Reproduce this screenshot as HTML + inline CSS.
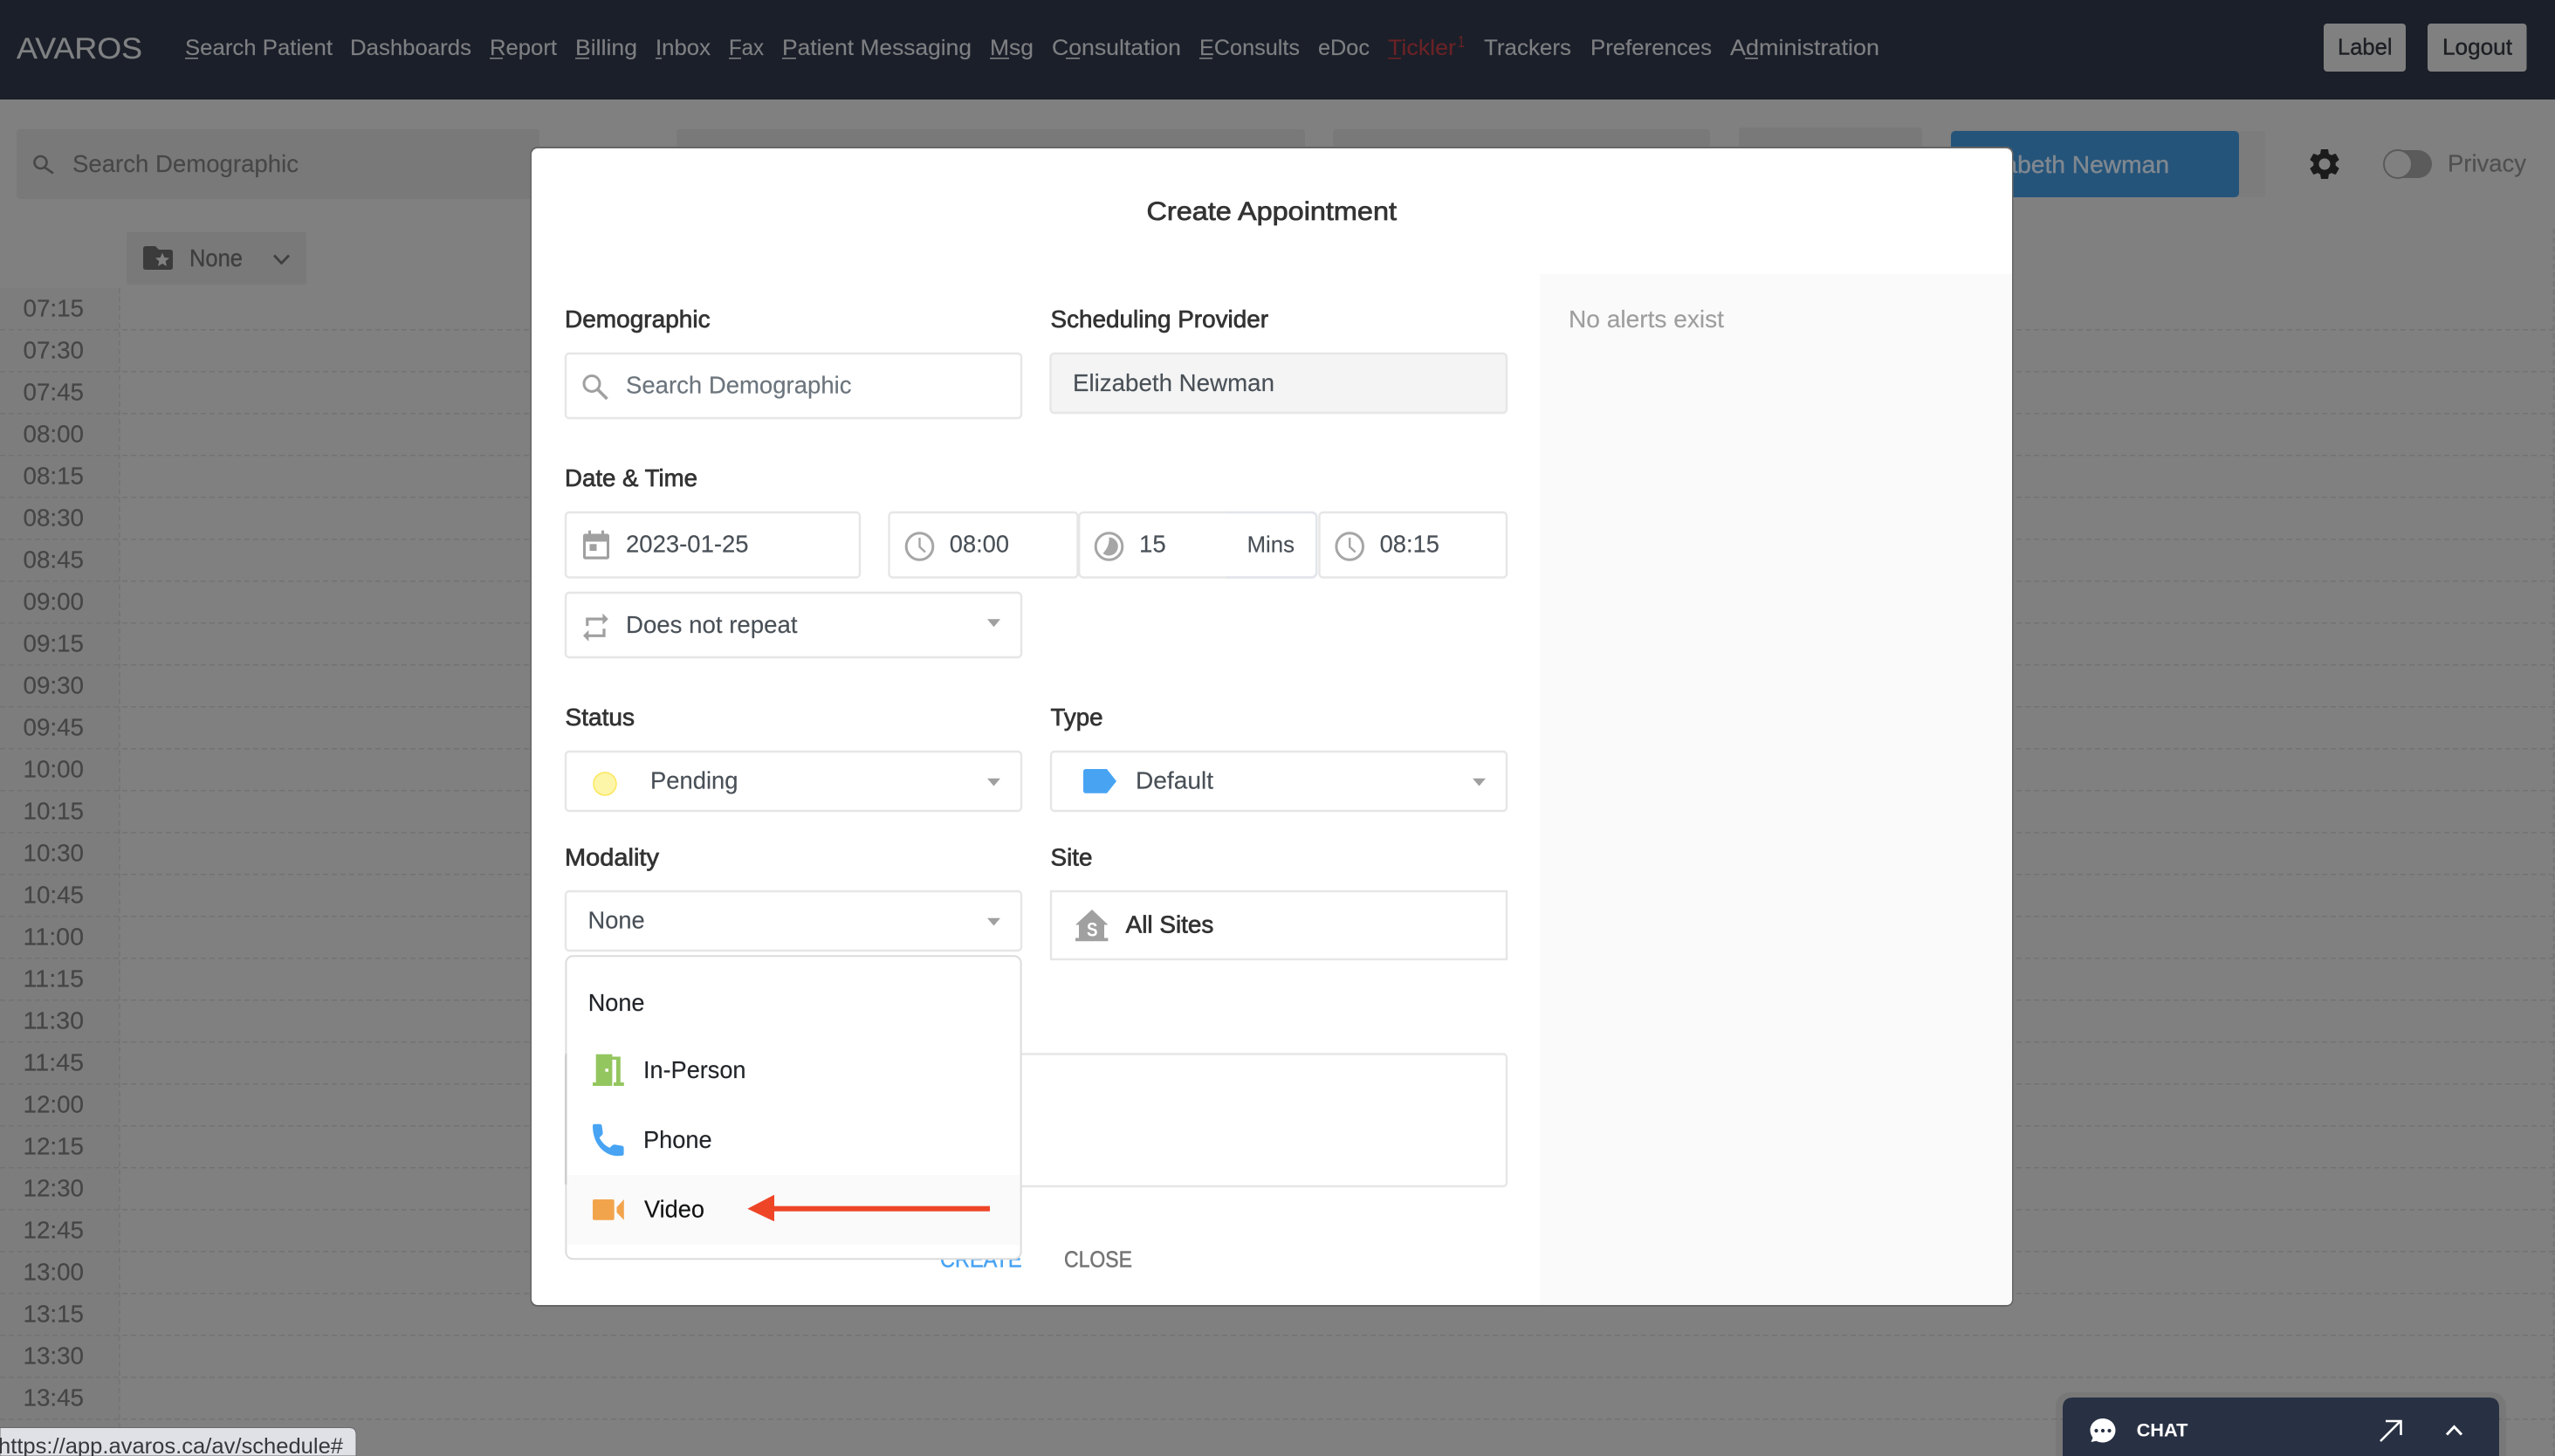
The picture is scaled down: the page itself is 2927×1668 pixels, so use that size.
<!DOCTYPE html>
<html lang="en">
<head>
<meta charset="utf-8">
<title>Create Appointment</title>
<style>
html,body{margin:0;padding:0;background:#808080;width:2927px;height:1668px;overflow:hidden}
svg{display:block;font-family:"Liberation Sans",Arial,sans-serif}
.nav{font-size:25px;fill:#7e7f82;stroke:#7e7f82;stroke-width:.15}
.time{font-size:27.5px;fill:#454545;stroke:#454545;stroke-width:.15}
.lab{font-size:27.5px;fill:#333;stroke:#333;stroke-width:.7}
.val{font-size:27.5px;fill:#495057;stroke:#495057;stroke-width:.15}
.itm{font-size:27.5px;fill:#212529;stroke:#212529;stroke-width:.15}
.box{fill:#fff;stroke:#e6e6e6;stroke-width:2.4}
.ic{fill:#a0a0a0}
.clk{fill:none;stroke:#a6a6a6;stroke-width:3}
.hand{fill:none;stroke:#a6a6a6;stroke-width:2.4}
</style>
</head>
<body>
<svg xmlns="http://www.w3.org/2000/svg" width="2927" height="1668" viewBox="0 0 2927 1668">
<!-- page background -->
<rect width="2927" height="1668" fill="#808080"/>
<rect x="0" y="330" width="137" height="1338" fill="#7d7d7d"/>

<!-- nav -->
<rect width="2927" height="114" fill="#1b1f29"/>
<text x="19" y="67" font-size="34" fill="#808183" stroke="#808183" stroke-width=".2" textLength="144" lengthAdjust="spacingAndGlyphs">AVAROS</text>
<text class="nav" x="212" y="63" textLength="169" lengthAdjust="spacingAndGlyphs">Search Patient</text>
<text class="nav" x="401" y="63" textLength="139" lengthAdjust="spacingAndGlyphs">Dashboards</text>
<text class="nav" x="561" y="63" textLength="77" lengthAdjust="spacingAndGlyphs">Report</text>
<text class="nav" x="659" y="63" textLength="71" lengthAdjust="spacingAndGlyphs">Billing</text>
<text class="nav" x="751" y="63" textLength="63" lengthAdjust="spacingAndGlyphs">Inbox</text>
<text class="nav" x="835" y="63" textLength="40" lengthAdjust="spacingAndGlyphs">Fax</text>
<text class="nav" x="896" y="63" textLength="217" lengthAdjust="spacingAndGlyphs">Patient Messaging</text>
<text class="nav" x="1134" y="63" textLength="50" lengthAdjust="spacingAndGlyphs">Msg</text>
<text class="nav" x="1205" y="63" textLength="148" lengthAdjust="spacingAndGlyphs">Consultation</text>
<text class="nav" x="1374" y="63" textLength="115" lengthAdjust="spacingAndGlyphs">EConsults</text>
<text class="nav" x="1510" y="63" textLength="59" lengthAdjust="spacingAndGlyphs">eDoc</text>
<text class="nav" x="1590" y="63" textLength="78" lengthAdjust="spacingAndGlyphs" style="fill:#6a2226;stroke:#6a2226">Tickler</text>
<text x="1670" y="54" font-size="18" fill="#6a2226" textLength="8" lengthAdjust="spacingAndGlyphs">1</text>
<text class="nav" x="1700" y="63" textLength="100" lengthAdjust="spacingAndGlyphs">Trackers</text>
<text class="nav" x="1822" y="63" textLength="139" lengthAdjust="spacingAndGlyphs">Preferences</text>
<text class="nav" x="1982" y="63" textLength="171" lengthAdjust="spacingAndGlyphs">Administration</text>
<!-- nav underlines -->
<g fill="#7e7f82">
<rect x="212" y="66" width="15" height="1.6"/>
<rect x="561" y="66" width="15" height="1.6"/>
<rect x="659" y="66" width="16" height="1.6"/>
<rect x="751" y="66" width="7" height="1.6"/>
<rect x="835" y="66" width="14" height="1.6"/>
<rect x="896" y="66" width="16" height="1.6"/>
<rect x="1134" y="66" width="22" height="1.6"/>
<rect x="1221" y="66" width="16" height="1.6"/>
<rect x="1374" y="66" width="15" height="1.6"/>
<rect x="1999" y="66" width="15" height="1.6"/>
</g>
<rect x="1590" y="66" width="15" height="1.6" fill="#6a2226"/>
<!-- nav buttons -->
<rect x="2662" y="27" width="94" height="55" rx="4" fill="#808080"/>
<rect x="2781" y="27" width="113.5" height="55" rx="4" fill="#808080"/>
<text x="2678" y="62.5" font-size="26" fill="#1d1f24" textLength="62.5" lengthAdjust="spacingAndGlyphs" stroke="#1d1f24" stroke-width=".4">Label</text>
<text x="2798" y="62.5" font-size="26" fill="#1d1f24" textLength="80" lengthAdjust="spacingAndGlyphs" stroke="#1d1f24" stroke-width=".4">Logout</text>

<!-- top bar behind overlay -->
<rect x="19" y="148" width="599" height="80" rx="4" fill="#797979"/>
<path d="M46.500 186m-7 0a7 7 0 1 0 14 0a7 7 0 1 0-14 0M51.500 192L61 198.500" fill="none" stroke="#474747" stroke-width="2.600"/>
<text x="83" y="197" font-size="28" fill="#474747" stroke="#474747" stroke-width=".15" textLength="259" lengthAdjust="spacingAndGlyphs">Search Demographic</text>
<rect x="775" y="148" width="720" height="80" rx="4" fill="#797979"/>
<rect x="1527" y="148" width="432" height="80" rx="4" fill="#797979"/>
<rect x="1992" y="146" width="210" height="82" rx="4" fill="#797979"/>
<rect x="2235" y="150" width="360" height="76" rx="4" fill="#7c7c7c"/>
<rect x="2235" y="150" width="330" height="76" rx="5" fill="#25547a"/>
<text x="2250" y="198" font-size="28" fill="#808890" stroke="#808890" stroke-width=".4" textLength="235" lengthAdjust="spacingAndGlyphs">Elizabeth Newman</text>
<!-- gear -->
<path transform="translate(2642.600 167.600) scale(1.7)" fill="#1b1b1b" d="M19.43 12.98c.04-.32.07-.64.07-.98s-.03-.66-.07-.98l2.11-1.65c.19-.15.24-.42.12-.64l-2-3.46c-.12-.22-.39-.3-.61-.22l-2.49 1c-.52-.4-1.08-.73-1.69-.98l-.38-2.65C14.46 2.18 14.25 2 14 2h-4c-.25 0-.46.18-.49.42l-.38 2.65c-.61.25-1.17.59-1.69.98l-2.49-1c-.23-.09-.49 0-.61.22l-2 3.46c-.13.22-.07.49.12.64l2.11 1.65c-.04.32-.07.65-.07.98s.03.66.07.98l-2.11 1.65c-.19.15-.24.42-.12.64l2 3.46c.12.22.39.3.61.22l2.49-1c.52.4 1.08.73 1.69.98l.38 2.65c.03.24.24.42.49.42h4c.25 0 .46-.18.49-.42l.38-2.65c.61-.25 1.17-.59 1.69-.98l2.49 1c.23.09.49 0 .61-.22l2-3.46c.12-.22.07-.49-.12-.64l-2.11-1.65z"/>
<circle cx="2663" cy="188" r="6.500" fill="#808080"/>
<!-- toggle -->
<rect x="2731" y="172" width="55" height="32" rx="16" fill="#5b5b5b"/>
<circle cx="2747" cy="188" r="16" fill="#808080" stroke="#5a5a5a" stroke-width="2"/>
<text x="2804" y="196.700" font-size="28" fill="#505050" stroke="#505050" stroke-width=".2" textLength="90" lengthAdjust="spacingAndGlyphs">Privacy</text>

<!-- none dropdown -->
<rect x="145" y="266" width="206" height="60" rx="2" fill="#797979"/>
<path d="M167 282h11l4 4h13q3 0 3 3v17q0 3-3 3H167q-3 0-3-3V285q0-3 3-3z" fill="#3b3b3b"/>
<polygon points="186,289.500 188.300,295 194,295.500 189.700,299.200 191,305 186,302 181,305 182.300,299.200 178,295.500 183.700,295" fill="#808080"/>
<text x="217" y="305" font-size="27.500" fill="#3f3f3f" stroke="#3f3f3f" stroke-width=".4" textLength="61" lengthAdjust="spacingAndGlyphs">None</text>
<path d="M314 292.500L322.500 301.500L331 292.500" fill="none" stroke="#3f3f3f" stroke-width="2.800"/>

<!-- schedule grid -->
<path d="M0 377.700H2927M0 425.700H2927M0 473.700H2927M0 521.700H2927M0 569.700H2927M0 617.700H2927M0 665.700H2927M0 713.700H2927M0 761.700H2927M0 809.700H2927M0 857.700H2927M0 905.700H2927M0 953.700H2927M0 1001.700H2927M0 1049.700H2927M0 1097.700H2927M0 1145.700H2927M0 1193.700H2927M0 1241.700H2927M0 1289.700H2927M0 1337.700H2927M0 1385.700H2927M0 1433.700H2927M0 1481.700H2927M0 1529.700H2927M0 1577.700H2927M0 1625.700H2927" fill="none" stroke="#727272" stroke-width="1.500" stroke-dasharray="6 4"/>
<path d="M137 330V1668M2925.500 262V1668" fill="none" stroke="#727272" stroke-width="1.500" stroke-dasharray="6 4"/>
<g class="time">
<text x="26.500" y="362.400" textLength="69.500" lengthAdjust="spacingAndGlyphs">07:15</text>
<text x="26.500" y="410.400" textLength="69.500" lengthAdjust="spacingAndGlyphs">07:30</text>
<text x="26.500" y="458.400" textLength="69.500" lengthAdjust="spacingAndGlyphs">07:45</text>
<text x="26.500" y="506.400" textLength="69.500" lengthAdjust="spacingAndGlyphs">08:00</text>
<text x="26.500" y="554.400" textLength="69.500" lengthAdjust="spacingAndGlyphs">08:15</text>
<text x="26.500" y="602.400" textLength="69.500" lengthAdjust="spacingAndGlyphs">08:30</text>
<text x="26.500" y="650.400" textLength="69.500" lengthAdjust="spacingAndGlyphs">08:45</text>
<text x="26.500" y="698.400" textLength="69.500" lengthAdjust="spacingAndGlyphs">09:00</text>
<text x="26.500" y="746.400" textLength="69.500" lengthAdjust="spacingAndGlyphs">09:15</text>
<text x="26.500" y="794.400" textLength="69.500" lengthAdjust="spacingAndGlyphs">09:30</text>
<text x="26.500" y="842.400" textLength="69.500" lengthAdjust="spacingAndGlyphs">09:45</text>
<text x="26.500" y="890.400" textLength="69.500" lengthAdjust="spacingAndGlyphs">10:00</text>
<text x="26.500" y="938.400" textLength="69.500" lengthAdjust="spacingAndGlyphs">10:15</text>
<text x="26.500" y="986.400" textLength="69.500" lengthAdjust="spacingAndGlyphs">10:30</text>
<text x="26.500" y="1034.400" textLength="69.500" lengthAdjust="spacingAndGlyphs">10:45</text>
<text x="26.500" y="1082.400" textLength="69.500" lengthAdjust="spacingAndGlyphs">11:00</text>
<text x="26.500" y="1130.400" textLength="69.500" lengthAdjust="spacingAndGlyphs">11:15</text>
<text x="26.500" y="1178.400" textLength="69.500" lengthAdjust="spacingAndGlyphs">11:30</text>
<text x="26.500" y="1226.400" textLength="69.500" lengthAdjust="spacingAndGlyphs">11:45</text>
<text x="26.500" y="1274.400" textLength="69.500" lengthAdjust="spacingAndGlyphs">12:00</text>
<text x="26.500" y="1322.400" textLength="69.500" lengthAdjust="spacingAndGlyphs">12:15</text>
<text x="26.500" y="1370.400" textLength="69.500" lengthAdjust="spacingAndGlyphs">12:30</text>
<text x="26.500" y="1418.400" textLength="69.500" lengthAdjust="spacingAndGlyphs">12:45</text>
<text x="26.500" y="1466.400" textLength="69.500" lengthAdjust="spacingAndGlyphs">13:00</text>
<text x="26.500" y="1514.400" textLength="69.500" lengthAdjust="spacingAndGlyphs">13:15</text>
<text x="26.500" y="1562.400" textLength="69.500" lengthAdjust="spacingAndGlyphs">13:30</text>
<text x="26.500" y="1610.400" textLength="69.500" lengthAdjust="spacingAndGlyphs">13:45</text>
</g>

<!-- status bar -->
<path d="M0 1635.500H400q8 0 8 8V1668H0z" fill="#e0e1e6" stroke="#6a6a6a" stroke-width="1"/>
<text x="-2" y="1665" font-size="25" fill="#37383c" textLength="395" lengthAdjust="spacingAndGlyphs">https://app.avaros.ca/av/schedule#</text>

<!-- chat -->
<rect x="2355" y="1595" width="516" height="90" rx="16" fill="#000" opacity=".06"/>
<path d="M2363 1668V1613q0-12 12-12H2851q12 0 12 12V1668z" fill="#283043"/>
<path d="M2409 1625c8 0 14.500 6 14.500 13.500s-6.500 14-14.500 14c-3 0-5.500-.6-7.500-1.800l-6 1.300 2-5c-1.800-2.500-3-5.400-3-8.500 0-7.500 6.500-13.500 14.500-13.500z" fill="#fff"/>
<circle cx="2401.500" cy="1639" r="2.100" fill="#283043"/>
<circle cx="2409" cy="1639" r="2.100" fill="#283043"/>
<circle cx="2416.500" cy="1639" r="2.100" fill="#283043"/>
<text x="2447.600" y="1645.700" font-size="21.500" font-weight="bold" fill="#fff" textLength="58.800" lengthAdjust="spacingAndGlyphs">CHAT</text>
<path d="M2727 1651L2750 1628M2733 1628H2750.500V1644" fill="none" stroke="#fff" stroke-width="2.600"/>
<path d="M2803 1643.500L2811.500 1634.500L2820 1643.500" fill="none" stroke="#fff" stroke-width="3"/>

<!-- modal -->
<rect x="607.500" y="168" width="1699" height="1329" rx="8" fill="#666"/>
<rect x="609" y="170" width="1696" height="1325" rx="7" fill="#fff"/>
<path d="M1764 314H2305V1488q0 7-7 7H1764z" fill="#fafafa"/>
<text x="1313.500" y="252" font-size="30" fill="#333" stroke="#333" stroke-width=".75" textLength="286.500" lengthAdjust="spacingAndGlyphs">Create Appointment</text>
<text x="1797" y="375" font-size="27.500" fill="#9e9e9e" stroke="#9e9e9e" stroke-width=".15" textLength="178" lengthAdjust="spacingAndGlyphs">No alerts exist</text>

<!-- labels -->
<text class="lab" x="647" y="375" textLength="166.600" lengthAdjust="spacingAndGlyphs">Demographic</text>
<text class="lab" x="1203.500" y="375" textLength="249.500" lengthAdjust="spacingAndGlyphs">Scheduling Provider</text>
<text class="lab" x="647" y="557" textLength="152" lengthAdjust="spacingAndGlyphs">Date &amp; Time</text>
<text class="lab" x="647.500" y="831" textLength="79.500" lengthAdjust="spacingAndGlyphs">Status</text>
<text class="lab" x="1203.500" y="831" textLength="60" lengthAdjust="spacingAndGlyphs">Type</text>
<text class="lab" x="647" y="991.700" textLength="108" lengthAdjust="spacingAndGlyphs">Modality</text>
<text class="lab" x="1203.500" y="991.700" textLength="48" lengthAdjust="spacingAndGlyphs">Site</text>

<!-- demographic -->
<rect class="box" x="648" y="405" width="522" height="74" rx="4"/>
<circle cx="678" cy="439.500" r="9" fill="none" stroke="#a0a0a0" stroke-width="3"/>
<path d="M684.500 446L695.500 457" stroke="#a0a0a0" stroke-width="3.600" fill="none"/>
<text x="717" y="450.700" font-size="27.500" fill="#6c757d" stroke="#6c757d" stroke-width=".15" textLength="258.500" lengthAdjust="spacingAndGlyphs">Search Demographic</text>

<!-- provider -->
<rect x="1203.500" y="405" width="522.500" height="68" rx="4" fill="#f4f4f4" stroke="#e6e6e6" stroke-width="2.400"/>
<text class="val" x="1229" y="448" textLength="231" lengthAdjust="spacingAndGlyphs">Elizabeth Newman</text>

<!-- date & time -->
<rect class="box" x="648" y="587" width="337" height="74.500" rx="4"/>
<rect x="674" y="607.700" width="3" height="6" fill="#a0a0a0"/>
<rect x="689" y="607.700" width="3" height="6" fill="#a0a0a0"/>
<rect x="668" y="611.500" width="30" height="29.200" rx="2.500" fill="#a0a0a0"/>
<rect x="671" y="620.500" width="24" height="17" fill="#fff"/>
<rect x="675.500" y="623.300" width="8" height="7.700" fill="#a0a0a0"/>
<text class="val" x="717" y="632.700" textLength="140.600" lengthAdjust="spacingAndGlyphs">2023-01-25</text>

<rect class="box" x="1018.500" y="587" width="216" height="74.500" rx="4"/>
<circle class="clk" cx="1053.500" cy="626" r="15.300"/>
<path class="hand" d="M1053.500 616V626.500L1060 632.500"/>
<text class="val" x="1087.800" y="632.700" textLength="68.200" lengthAdjust="spacingAndGlyphs">08:00</text>

<rect class="box" x="1236.200" y="587" width="272" height="74.500" rx="5"/>
<path d="M1405 587H1501.500q6.700 0 6.700 6.700V654.800q0 6.700-6.700 6.700H1405" fill="none" stroke="#e3e5ec" stroke-width="2.400"/>
<circle class="clk" cx="1270.500" cy="626" r="15.300"/>
<path d="M1270.500 615.500A10.500 10.500 0 1 1 1263.500 634C1268 629 1271 624 1270.500 615.500z" fill="#a6a6a6"/>
<text class="val" x="1305" y="632.700" textLength="30.700" lengthAdjust="spacingAndGlyphs">15</text>
<text class="val" x="1428.600" y="632.700" style="font-size:26px" textLength="54.400" lengthAdjust="spacingAndGlyphs">Mins</text>

<rect class="box" x="1511.500" y="587" width="214.500" height="74.500" rx="4"/>
<circle class="clk" cx="1546.200" cy="626" r="15.300"/>
<path class="hand" d="M1546.200 616V626.500L1552.700 632.500"/>
<text class="val" x="1580.600" y="632.700" textLength="68.400" lengthAdjust="spacingAndGlyphs">08:15</text>

<!-- repeat -->
<rect class="box" x="648" y="679" width="522" height="74" rx="4"/>
<path transform="translate(663.200 699.500) scale(1.6)" fill="#a0a0a0" d="M7 7h10v3l4-4-4-4v3H5v6h2V7zm10 10H7v-3l-4 4 4 4v-3h12v-6h-2v4z"/>
<text class="val" x="717" y="725" textLength="196.500" lengthAdjust="spacingAndGlyphs">Does not repeat</text>
<polygon class="ic" points="1131,709.300 1146,709.300 1138.500,718.300"/>

<!-- status -->
<rect class="box" x="648" y="861" width="522" height="68" rx="4"/>
<circle cx="693" cy="898" r="13" fill="#fdf5a8" stroke="#fbe75b" stroke-width="1.500"/>
<text class="val" x="745" y="903.300" textLength="100.500" lengthAdjust="spacingAndGlyphs">Pending</text>
<polygon class="ic" points="1131,891.700 1146,891.700 1138.500,900.500"/>

<!-- type -->
<rect class="box" x="1204" y="861" width="522" height="68" rx="4"/>
<path d="M1244 881H1268L1279 895L1268 908.700H1244q-3 0-3-3V884q0-3 3-3z" fill="#48a4f3"/>
<text class="val" x="1301" y="903.300" textLength="89" lengthAdjust="spacingAndGlyphs">Default</text>
<polygon class="ic" points="1687,891.700 1702,891.700 1694.500,900.500"/>

<!-- modality -->
<rect class="box" x="648" y="1021" width="522" height="68" rx="4"/>
<text class="val" x="673.500" y="1063.300" textLength="65.200" lengthAdjust="spacingAndGlyphs">None</text>
<polygon class="ic" points="1131,1051.700 1146,1051.700 1138.500,1060.500"/>

<!-- site -->
<rect class="box" x="1204" y="1021" width="522" height="78"/>
<path d="M1251 1042L1269.400 1059.500H1265V1074.500H1269.400V1078.300H1232V1074.500H1236V1059.500H1232z" fill="#a0a0a0"/>
<text x="1245" y="1072.700" font-size="22" font-weight="bold" fill="#fff" textLength="12.500" lengthAdjust="spacingAndGlyphs">S</text>
<text class="lab" x="1289.600" y="1068.300" textLength="100.800" lengthAdjust="spacingAndGlyphs">All Sites</text>

<!-- notes -->
<rect class="box" x="648" y="1207.500" width="1078" height="151.500" rx="4"/>

<!-- footer buttons -->
<text x="1077" y="1451.700" font-size="25.500" fill="#48a4f3" stroke="#48a4f3" stroke-width=".5" textLength="93.600" lengthAdjust="spacingAndGlyphs">CREATE</text>
<text x="1219" y="1451.700" font-size="25.500" fill="#757575" stroke="#757575" stroke-width=".5" textLength="78" lengthAdjust="spacingAndGlyphs">CLOSE</text>

<!-- dropdown -->
<rect x="648.400" y="1095.300" width="521.200" height="347" rx="8" fill="#fff" stroke="#dcdcdc" stroke-width="2"/>
<rect x="647.400" y="1207" width="2" height="150" fill="#c8c8c8"/>
<rect x="649.400" y="1346" width="519.200" height="80" fill="#fafafa"/>
<text class="itm" x="673.700" y="1158" textLength="64.800" lengthAdjust="spacingAndGlyphs">None</text>
<path d="M682.700 1207.700H701.400V1210.500H710.800V1240H714.800V1244H703V1240H706V1214H701.400V1244H679V1240H682.700z" fill="#94c65f"/>
<rect x="693.400" y="1224.300" width="3.600" height="3.400" fill="#fff"/>
<text class="itm" x="737" y="1235" textLength="117.500" lengthAdjust="spacingAndGlyphs">In-Person</text>
<path transform="translate(679 1287.700) scale(1.13 1.11) translate(-679 -1287.700)" d="M681 1287.700h5q2 0 2.300 2l1 7q0 1.500-1 2.500l-2.500 2.500c2.500 5 6 8.500 10.500 10.500l2.500-2.500q1.200-1 2.700-.8l7 1.200q2 .3 2 2.300v6q0 2-2 1.900C693 1323 679 1310 679 1289.700q0-2 2-2z" fill="#48a4f3"/>
<text class="itm" x="737" y="1315" textLength="78.700" lengthAdjust="spacingAndGlyphs">Phone</text>
<rect x="679" y="1374" width="24.700" height="23.700" rx="2" fill="#f2a44d"/>
<path d="M706.500 1383L714.800 1374V1397.700L706.500 1389z" fill="#f2a44d"/>
<text class="itm" style="fill:#111" x="738" y="1394.300" textLength="69" lengthAdjust="spacingAndGlyphs">Video</text>
<!-- arrow -->
<rect x="880" y="1381.700" width="254" height="6" fill="#ee4527"/>
<polygon points="856.300,1384.700 887,1368.700 887,1399.300" fill="#ee4527"/>
</svg>
</body>
</html>
